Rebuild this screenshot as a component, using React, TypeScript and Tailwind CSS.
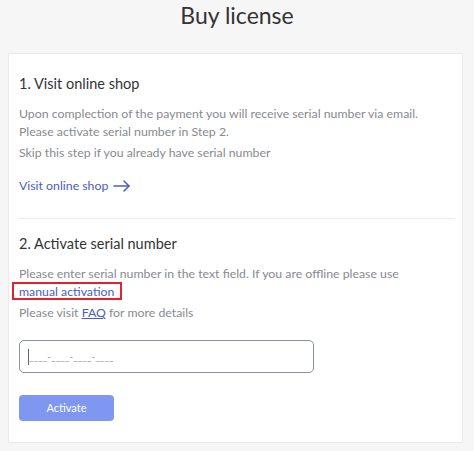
import React from "react";

export default function App() {
  const font = { fontFamily: "Lato, 'Noto Sans', sans-serif" };
  return (
    <div className="w-[474px] h-[451px] bg-[#f6f6f6] overflow-hidden" style={font}>
      <div className="h-[53px] flex justify-center">
        <h1 className="text-[23px] leading-[30px] text-[#333] mt-[0px]">Buy license</h1>
      </div>
      <div className="ml-[8px] mr-[11px] h-[390px] bg-white border border-[#ebebeb] pl-[10px] pr-[8px] pt-[20px]">
        <h2 className="text-[14.5px] leading-[20px] text-[#333]">1. Visit online shop</h2>
        <p className="mt-[11px] text-[12.3px] leading-[18px] text-[#878a90]">
          Upon complection of the payment you will receive serial number via email.
          <br />
          Please activate serial number in Step 2.
        </p>
        <p className="mt-[3px] text-[12.3px] leading-[18px] text-[#878a90]">
          Skip this step if you already have serial number
        </p>
        <div className="mt-[15px] flex items-center gap-[5px] text-[12.3px] leading-[18px] text-[#4b5cc4]">
          <span>Visit online shop</span>
          <svg width="17" height="12" viewBox="0 0 17 12" fill="none" stroke="currentColor" strokeWidth="1.5" strokeLinecap="round" strokeLinejoin="round">
            <path d="M1 6H16" />
            <path d="M11 1L16 6L11 11" />
          </svg>
        </div>
        <div className="mt-[23px] h-px bg-[#ececec]" />
        <h2 className="mt-[15px] text-[14.5px] leading-[20px] text-[#333]">2. Activate serial number</h2>
        <p className="mt-[11px] text-[12.3px] leading-[18px] text-[#878a90]">
          Please enter serial number in the text field. If you are offline please use
        </p>
        <div className="text-[12.3px] leading-[18px]">
          <span className="relative text-[#4b5cc4]">
            manual activation
            <span className="absolute -left-[7px] -right-[8px] -top-[2px] -bottom-[1px] border-2 border-[#e0222b]" />
          </span>
        </div>
        <p className="mt-[3px] text-[12.3px] leading-[18px] text-[#878a90]">
          Please visit <span className="text-[#4b5cc4] underline">FAQ</span> for more details
        </p>
        <div className="mt-[18px] w-[295px] h-[33px] rounded-[5px] border border-[#8a90a8] flex items-center pl-[8px]">
          <span className="w-px h-[16px] bg-[#666]" />
          <span className="text-[10px] text-[#9a9a9a]">____-____-____-____</span>
        </div>
        <button className="mt-[22px] w-[95px] h-[26px] rounded-[4px] bg-[#7f97f1] text-white text-[11px] flex items-center justify-center">
          Activate
        </button>
      </div>
    </div>
  );
}
